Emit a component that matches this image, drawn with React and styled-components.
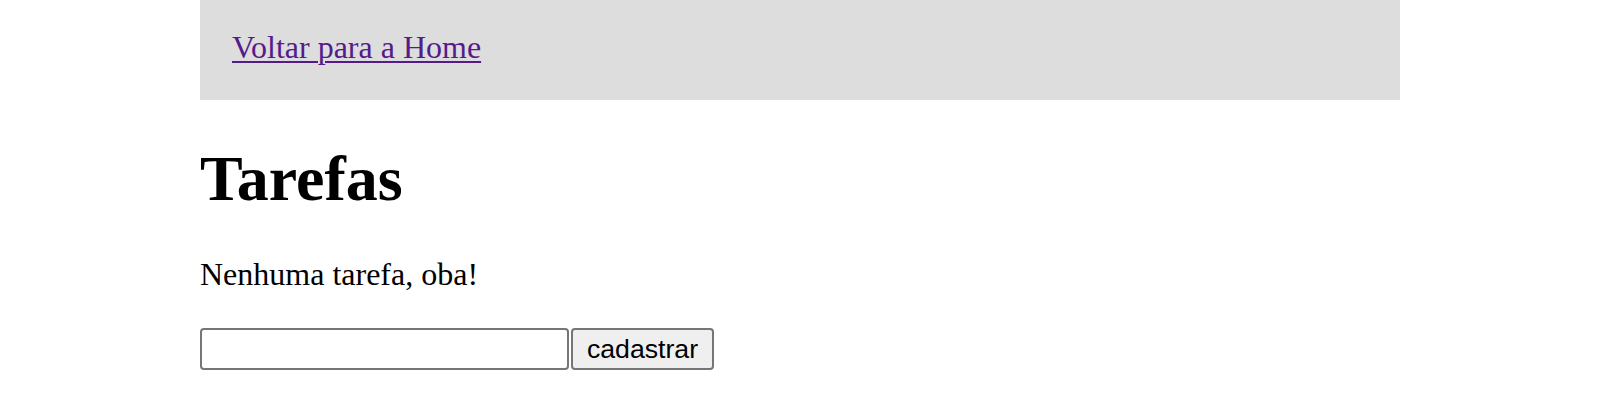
import React from "react";
import styled, { createGlobalStyle } from "styled-components";

const GlobalStyle = createGlobalStyle`
   body {
      margin: 0;
      background: #fff;
      font-family: "Liberation Serif", "Times New Roman", serif;
      font-size: 32px;
      color: #000;
   }
`;

const Pagina = styled.div`
   width: 1200px;
   margin: 0 auto;
`;

const Cabecalho = styled.header`
   box-sizing: border-box;
   height: 100px;
   padding: 29px 32px 0;
   background: #dddddd;
`;

const LinkHome = styled.a`
   color: #551a8b;
   text-decoration: underline;
   text-decoration-thickness: 2px;
   text-underline-offset: 3px;
`;

const Titulo = styled.h1`
   font-size: 64px;
   font-weight: bold;
   margin: 42px 0 40px;
`;

const Mensagem = styled.p`
   margin: 0;
`;

const Formulario = styled.form`
   display: flex;
   align-items: stretch;
   gap: 2px;
   margin-top: 35px;
`;

const Campo = styled.input`
   box-sizing: border-box;
   width: 369px;
   height: 42px;
   border: 2px solid #767676;
   border-radius: 4px;
   background: #fff;
   padding: 2px 4px;
   font-family: "Liberation Sans", Arial, sans-serif;
   font-size: 26.67px;
`;

const Botao = styled.button`
   box-sizing: border-box;
   width: 143px;
   height: 42px;
   padding: 0;
   border: 2px solid #767676;
   border-radius: 4px;
   background: #efefef;
   color: #000;
   font-family: "Liberation Sans", Arial, sans-serif;
   font-size: 26.67px;
   line-height: 1;
`;

const App = () => {
   return (
      <Pagina>
         <GlobalStyle />
         <Cabecalho>
            <LinkHome href="#">Voltar para a Home</LinkHome>
         </Cabecalho>
         <Titulo>Tarefas</Titulo>
         <Mensagem>Nenhuma tarefa, oba!</Mensagem>
         <Formulario onSubmit={(e) => e.preventDefault()}>
            <Campo type="text" />
            <Botao type="submit">cadastrar</Botao>
         </Formulario>
      </Pagina>
   );
};

export default App;
